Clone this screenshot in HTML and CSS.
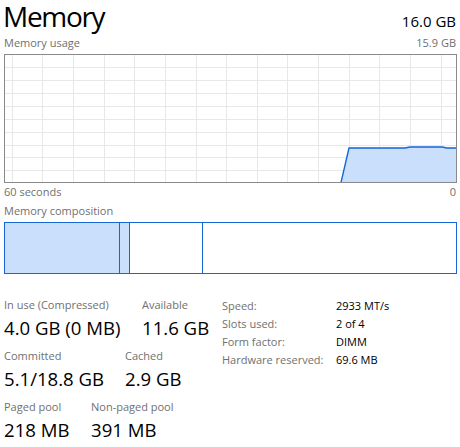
FILE: index.html
```html
<!DOCTYPE html>
<html>
<head>
<meta charset="utf-8">
<link rel="stylesheet" href="styles.css">
</head>
<body>
<div class="page">
  <div class="header">
    <div class="title">Memory</div>
    <div class="total">16.0 GB</div>
  </div>
  <div class="caption-row top-caption">
    <span>Memory usage</span>
    <span>15.9 GB</span>
  </div>
  <div class="graph">
    <svg width="451" height="127" viewBox="0 0 451 127">
      <g class="grid">
        <path d="M7.5 0V127M37.5 0V127M68.5 0V127M99.5 0V127M129.5 0V127M160.5 0V127M191.5 0V127M221.5 0V127M252.5 0V127M282.5 0V127M313.5 0V127M344.5 0V127M374.5 0V127M405.5 0V127M436.5 0V127"/>
        <path d="M0 12.5H451M0 25.5H451M0 38.5H451M0 51.5H451M0 64.5H451M0 77.5H451M0 90.5H451M0 102.5H451M0 115.5H451"/>
      </g>
      <polygon class="area" points="336,127 344,93 400,93 405,92 437,92 442,93 451,93 451,127"/>
      <polyline class="line" points="336,127.5 344,93 400,93 405,92 437,92 442,93 451,93"/>
    </svg>
  </div>
  <div class="caption-row axis">
    <span>60 seconds</span>
    <span>0</span>
  </div>
  <div class="caption-row comp-caption">
    <span>Memory composition</span>
  </div>
  <div class="composition">
    <div class="seg inuse"></div>
    <div class="seg modified"></div>
    <div class="seg standby"></div>
    <div class="seg free"></div>
  </div>
  <div class="details">
    <div class="stats">
      <div class="stat-row">
        <div class="stat w1"><div class="label">In use (Compressed)</div><div class="value">4.0 GB (0 MB)</div></div>
        <div class="stat"><div class="label">Available</div><div class="value">11.6 GB</div></div>
      </div>
      <div class="stat-row">
        <div class="stat w2"><div class="label">Committed</div><div class="value">5.1/18.8 GB</div></div>
        <div class="stat"><div class="label">Cached</div><div class="value">2.9 GB</div></div>
      </div>
      <div class="stat-row">
        <div class="stat w3"><div class="label">Paged pool</div><div class="value">218 MB</div></div>
        <div class="stat"><div class="label">Non-paged pool</div><div class="value">391 MB</div></div>
      </div>
    </div>
    <div class="specs">
      <div class="spec"><span class="k">Speed:</span><span class="v">2933 MT/s</span></div>
      <div class="spec"><span class="k">Slots used:</span><span class="v">2 of 4</span></div>
      <div class="spec"><span class="k">Form factor:</span><span class="v">DIMM</span></div>
      <div class="spec"><span class="k">Hardware reserved:</span><span class="v">69.6 MB</span></div>
    </div>
  </div>
</div>
</body>
</html>
```

FILE: styles.css
```css
html, body {
  margin: 0;
  padding: 0;
  background: #ffffff;
}
body {
  font-family: "Open Sans", "Noto Sans", sans-serif;
  color: #000;
}
.page {
  width: 452px;
  padding: 0 4px;
}
.header {
  display: flex;
  justify-content: space-between;
  align-items: baseline;
  height: 32px;
}
.title {
  font-size: 28px;
  line-height: 32px;
  letter-spacing: -1.3px;
  margin-left: -1px;
}
.total {
  font-size: 15px;
  line-height: 20px;
}
.caption-row {
  display: flex;
  justify-content: space-between;
  font-size: 11px;
  line-height: 14px;
  height: 14px;
  color: #707070;
}
.top-caption { margin-top: 4px; }
.graph {
  margin-top: 4px;
  width: 451px;
  height: 127px;
  border: 1px solid #8a8a8a;
}
.graph svg { display: block; }
.grid path {
  stroke: #e8e8e8;
  stroke-width: 1;
  fill: none;
}
.area { fill: #c9dffb; }
.line {
  fill: none;
  stroke: #1566d6;
  stroke-width: 1.4;
}
.axis { margin-top: 2px; }
.comp-caption { margin-top: 5px; }
.composition {
  margin-top: 4px;
  display: flex;
  height: 50px;
  width: 451px;
  border: 1px solid #1566d6;
}
.seg { height: 100%; }
.inuse { width: 114px; background: #c9dffb; }
.modified { width: 9px; background: #c9dffb; border-left: 1px solid #1566d6; }
.standby { width: 72px; border-left: 1px solid #1566d6; }
.free { flex: 1; border-left: 1px solid #1566d6; }
.details {
  display: flex;
  margin-top: 24px;
}
.stats {
  width: 218px;
  display: flex;
  flex-direction: column;
  gap: 9px;
}
.stat-row { display: flex; }
.w1 { width: 138px; }
.w2 { width: 121px; }
.w3 { width: 87px; }
.label {
  font-size: 11px;
  line-height: 14px;
  color: #707070;
  white-space: nowrap;
}
.value {
  margin-top: 4px;
  font-size: 18.6px;
  line-height: 24px;
  white-space: nowrap;
}
.specs {
  margin-top: -1px;
  font-size: 11px;
  line-height: 18px;
}
.spec { display: flex; }
.k { width: 114px; color: #707070; }
.v { color: #000; }
```
